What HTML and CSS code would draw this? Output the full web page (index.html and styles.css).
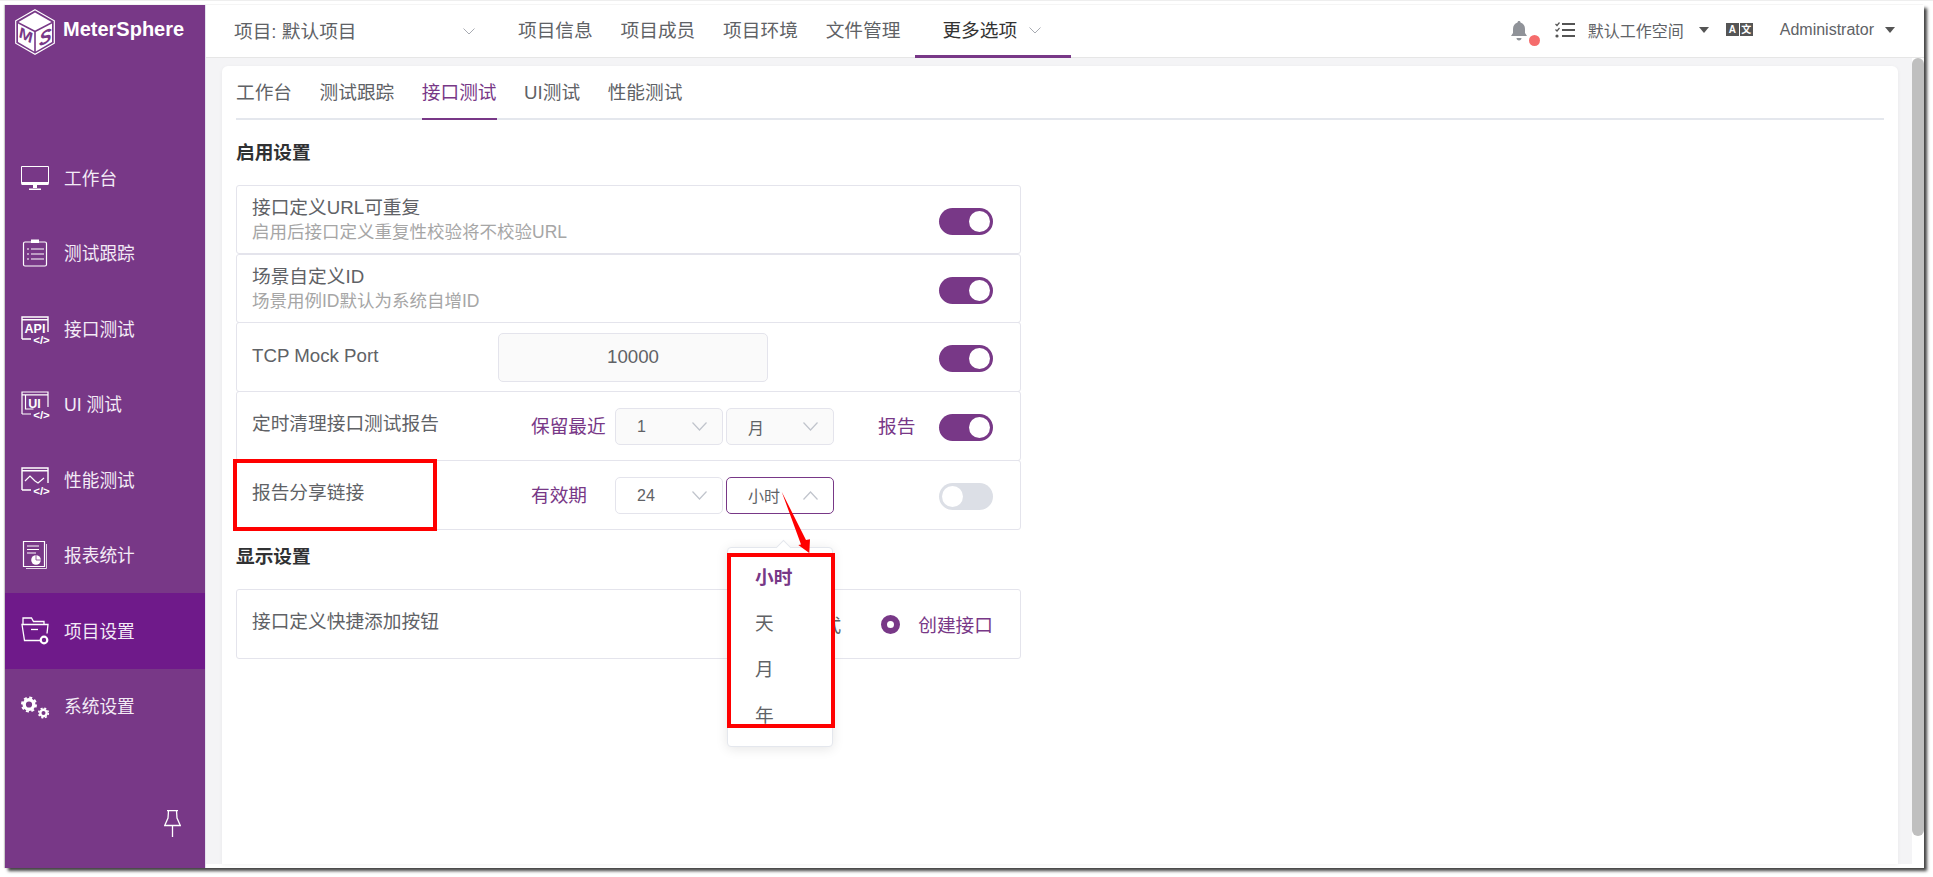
FILE: index.html
```html
<!DOCTYPE html>
<html>
<head>
	<title>MeterSphere</title>
	<meta charset="utf8"/>
	<link rel="stylesheet" href="styles.css">
</head>
<body>
<div class="window">
	<aside class="sidebar">
		<div class="logo">
			<svg class="logo-mark" viewBox="0 0 40 46" width="40" height="46">
				<polygon points="20,0.7 39.3,11.8 39.3,34.2 20,45.3 0.7,34.2 0.7,11.8" fill="none" stroke="#fff" stroke-width="1.2"/>
				<polygon points="20,3.5 36.5,13 20,21.5 3.5,13" fill="#fff"/>
				<polygon points="3,14.5 19.2,23 19.2,42.5 3,33" fill="#fff"/>
				<polygon points="37,14.5 20.8,23 20.8,42.5 37,33" fill="#fff"/>
				<text class="logo-letter" transform="translate(4 28) skewY(28)" font-size="16">M</text>
				<text class="logo-letter" transform="translate(24 38) skewY(-28)" font-size="19">S</text>
			</svg>
			<span class="logo-name">MeterSphere</span>
		</div>
		<nav class="menu">
			<a class="menu-item">
				<svg class="menu-icon" viewBox="0 0 28 28"><path d="M.5 2.500h27v17H.5z" fill="none" stroke="#fff"/><path d="M.5 18h27v3H.5z" fill="#fff"/><path d="M12 21h4v3h-4zM8 24.500h12v1.500H8z" fill="#fff"/></svg>
				<span>工作台</span>
			</a>
			<a class="menu-item">
				<svg class="menu-icon" viewBox="0 0 28 28"><rect x="2.500" y="3" width="23" height="24" rx="1.500" fill="none" stroke="#fff" stroke-width="1.200"/><path d="M10 .5h8v3.500h-8z" fill="#fff"/><path d="M6 10h2M10 10h13M6 15h2M10 15h13M6 20h2M10 20h13" stroke="#fff" stroke-width="1.200"/></svg>
				<span>测试跟踪</span>
			</a>
			<a class="menu-item">
				<svg class="menu-icon" viewBox="0 0 28 28"><path d="M1 24V2h26v15M1 24h9M1 4.800h26" fill="none" stroke="#fff" stroke-width="1.400"/><text class="icon-text" x="14" y="18" font-size="12.500">API</text><text class="icon-text" x="20.500" y="29" font-size="11.500">&lt;/&gt;</text></svg>
				<span>接口测试</span>
			</a>
			<a class="menu-item">
				<svg class="menu-icon" viewBox="0 0 28 28"><path d="M1 24V2h26v15M1 24h9M1 4.800h26M4.500 5v14h8" fill="none" stroke="#fff" stroke-width="1.200"/><text class="icon-text" x="13.500" y="17.500" font-size="12.500">UI</text><text class="icon-text" x="20.500" y="29" font-size="11.500">&lt;/&gt;</text></svg>
				<span>UI 测试</span>
			</a>
			<a class="menu-item">
				<svg class="menu-icon" viewBox="0 0 28 28"><path d="M1 24V2h26v15M1 24h9M1 4.800h26" fill="none" stroke="#fff" stroke-width="1.400"/><path d="M4 15l5-5 5 5 3 2 6-5" fill="none" stroke="#fff" stroke-width="1.200"/><text class="icon-text" x="20.500" y="29" font-size="11.500">&lt;/&gt;</text></svg>
				<span>性能测试</span>
			</a>
			<a class="menu-item">
				<svg class="menu-icon" viewBox="0 0 28 28"><path d="M2.500.5h21v25h-21z" fill="none" stroke="#fff" stroke-width="1.200"/><path d="M25.500 3v24.500H5" fill="none" stroke="#fff" stroke-width=".8"/><path d="M6 5h12M6 8.500h12M6 12h9" stroke="#fff" stroke-width="1.200"/><circle cx="15" cy="19" r="4.800" fill="#fff"/><path d="M15 19v-4.800M15 19h4.800" stroke="#783887" stroke-width=".8"/></svg>
				<span>报表统计</span>
			</a>
			<a class="menu-item active">
				<svg class="menu-icon" viewBox="0 0 28 28"><path d="M20 23.500H3.500L1 7.500h26l-1 9M2 7.500V1h8.500l2 3.500H23v3" fill="none" stroke="#fff" stroke-width="1.300"/><path d="M10 12.500h7" stroke="#fff" stroke-width="1.300"/><circle cx="23" cy="23" r="3.300" fill="none" stroke="#fff" stroke-width="2.200"/></svg>
				<span>项目设置</span>
			</a>
			<a class="menu-item">
				<svg class="menu-icon" viewBox="0 0 28 28">
					<circle cx="8" cy="12.500" r="4.800" fill="none" stroke="#fff" stroke-width="3.400"/>
					<circle cx="8" cy="12.500" r="7" fill="none" stroke="#fff" stroke-width="2" stroke-dasharray="3 2.500"/>
					<circle cx="22.500" cy="21" r="3.200" fill="none" stroke="#fff" stroke-width="2.400"/>
					<circle cx="22.500" cy="21" r="4.800" fill="none" stroke="#fff" stroke-width="1.600" stroke-dasharray="2 1.800"/>
				</svg>
				<span>系统设置</span>
			</a>
		</nav>
		<svg class="pin" viewBox="0 0 17 27" width="17" height="27"><path d="M3 .7h11M4.500 .7L4 8 .7 15.500h15.600L13 8 12.500 .7M8.500 15.500V27" fill="none" stroke="#fff" stroke-width="1.300"/></svg>
	</aside>

	<div class="main">
		<header class="topbar">
			<div class="project">
				<span>项目: 默认项目</span>
				<svg class="chevron" viewBox="0 0 12 7" width="12" height="7"><path d="M.5.5L6 6 11.500.5" fill="none" stroke="#a8abb2"/></svg>
			</div>
			<nav class="topnav">
				<a>项目信息</a>
				<a>项目成员</a>
				<a>项目环境</a>
				<a>文件管理</a>
			</nav>
			<div class="more">
				<span>更多选项</span>
				<svg class="chevron" viewBox="0 0 12 7" width="12" height="7"><path d="M.5.5L6 6 11.500.5" fill="none" stroke="#a8abb2"/></svg>
			</div>
			<div class="topright">
				<span class="bell">
					<svg viewBox="0 0 16 20" width="16" height="20"><path d="M8 0c1 0 1.500.7 1.500 1.500C12.500 2.300 14 5 14 8v4l2 3H0l2-3V8c0-3 1.500-5.700 4.500-6.500C6.500.7 7 0 8 0zM5.500 17h5c0 1.500-1 2.500-2.500 2.500S5.500 18.500 5.500 17z" fill="#909399"/></svg>
					<i class="bell-dot"></i>
				</span>
				<svg class="tasks" viewBox="0 0 20 16" width="20" height="16"><path d="M.5 2l1.500 1.500L4.500.5M.5 7.500L2 9l2.500-3" fill="none" stroke="#555" stroke-width="1.200"/><circle cx="2" cy="14" r="1.600" fill="#555"/><path d="M7 2h13M7 8h13M7 14h13" stroke="#555" stroke-width="2"/></svg>
				<span class="workspace">默认工作空间</span>
				<i class="caret"></i>
				<span class="lang"><b>A</b><b>文</b></span>
				<span class="user">Administrator</span>
				<i class="caret user-caret"></i>
			</div>
		</header>

		<div class="body">
			<div class="content">
				<section class="card">
					<div class="tabs">
						<a>工作台</a>
						<a>测试跟踪</a>
						<a class="active">接口测试</a>
						<a>UI测试</a>
						<a>性能测试</a>
					</div>

					<h3 class="section-title">启用设置</h3>
					<div class="setting desc">
						<div class="setting-text">
							<div class="name">接口定义URL可重复</div>
							<div class="hint">启用后接口定义重复性校验将不校验URL</div>
						</div>
						<span class="switch on"><i></i></span>
					</div>
					<div class="setting desc">
						<div class="setting-text">
							<div class="name">场景自定义ID</div>
							<div class="hint">场景用例ID默认为系统自增ID</div>
						</div>
						<span class="switch on"><i></i></span>
					</div>
					<div class="setting">
						<div class="name port-name">TCP Mock Port</div>
						<div class="port-input">10000</div>
						<span class="switch on"><i></i></span>
					</div>
					<div class="setting">
						<div class="name cleanup-name">定时清理接口测试报告</div>
						<span class="link-text keep">保留最近</span>
						<span class="select disabled">1<svg class="arrow" viewBox="0 0 15 9" width="15" height="9"><path d="M.5.5l7 7.500 7-7.500" fill="none" stroke="#c0c4cc" stroke-width="1.200"/></svg></span>
						<span class="select disabled">月<svg class="arrow" viewBox="0 0 15 9" width="15" height="9"><path d="M.5.5l7 7.500 7-7.500" fill="none" stroke="#c0c4cc" stroke-width="1.200"/></svg></span>
						<span class="link-text unit">报告</span>
						<span class="switch on"><i></i></span>
					</div>
					<div class="setting">
						<div class="name cleanup-name">报告分享链接</div>
						<span class="link-text keep">有效期</span>
						<span class="select">24<svg class="arrow" viewBox="0 0 15 9" width="15" height="9"><path d="M.5.5l7 7.500 7-7.500" fill="none" stroke="#c0c4cc" stroke-width="1.200"/></svg></span>
						<span class="select open"><span class="select-value">小时</span><svg class="arrow" viewBox="0 0 15 9" width="15" height="9"><path d="M.5 8.500l7-7.500 7 7.500" fill="none" stroke="#c0c4cc" stroke-width="1.200"/></svg></span>
						<span class="switch"><i></i></span>
					</div>

					<h3 class="section-title">显示设置</h3>
					<div class="setting">
						<div class="name">接口定义快捷添加按钮</div>
						<div class="radios">
							<span class="radio"></span><span class="radio-label off">调试模式</span>
							<span class="radio checked"></span><span class="radio-label">创建接口</span>
						</div>
					</div>
				</section>
			</div>
			<div class="scrollbar"><div class="thumb"></div></div>
		</div>
	</div>

	<ul class="dropdown">
		<li class="selected">小时</li>
		<li>天</li>
		<li>月</li>
		<li>年</li>
	</ul>

	<div class="mark mark-row"></div>
	<div class="mark mark-list"></div>
	<svg class="mark-arrow" viewBox="0 0 32 64" width="32" height="64"><polygon points="1.700,0.700 26,49 30,48.300 29.300,62 18.300,54 21,53.500" fill="#f00"/></svg>
</div>
</body>
</html>
```

FILE: styles.css
```css
html, body {
	height: 877px;
	margin: 0;
	overflow: hidden;
}

body {
	background: #fff;
	border-top: 1px solid #eee;
	box-sizing: border-box;
	color: #606266;
	font-family: "Liberation Sans", "Noto Sans CJK SC", sans-serif;
	font-size: 18.7px;
	padding: 4px 0 0 5px;
}

a {
	color: inherit;
}

.window {
	box-shadow: 3px 3px 3px #444, -1px 0 1px #ccc;
	display: flex;
	height: 863px;
	position: relative;
	width: 1919px;
}

/* sidebar */
.sidebar {
	background: #783887;
	border-right: 1px solid #e4e2ee;
	box-sizing: border-box;
	flex: none;
	height: 100%;
	position: relative;
	width: 201px;
}

.logo {
	align-items: center;
	display: flex;
	height: 46px;
	padding: 4px 0 0 10px;
}

.logo-name {
	color: #fff;
	font-size: 20px;
	font-weight: bold;
	margin-left: 8px;
	margin-top: -6px;
}

.logo-letter {
	fill: #783887;
	font-family: "Liberation Sans", sans-serif;
	font-style: italic;
	font-weight: bold;
}

.menu {
	margin-top: 85px;
}

.menu-item {
	align-items: center;
	color: #f3ebf6;
	display: flex;
	font-size: 17.700px;
	height: 75.500px;
	padding-left: 16px;
}

.menu-item span {
	margin-bottom: 2px;
}

.menu-item.active {
	background: #6f1a8a;
}

.menu-icon {
	flex: none;
	height: 28px;
	margin-right: 15px;
	overflow: visible;
	width: 28px;
}

.icon-text {
	fill: #fff;
	font-family: "Liberation Sans", sans-serif;
	font-weight: bold;
	text-anchor: middle;
}

.pin {
	bottom: 31px;
	position: absolute;
	right: 24px;
}

/* top bar */
.main {
	display: flex;
	flex: 1;
	flex-direction: column;
	min-width: 0;
}

.topbar {
	align-items: center;
	border-bottom: 1px solid #e6e6e6;
	display: flex;
	flex: none;
	height: 52px;
}

.project {
	align-items: center;
	display: flex;
	justify-content: space-between;
	margin-left: 28px;
	width: 241px;
}

.project span {
	margin-bottom: 4px;
}

.chevron {
	flex: none;
}

.topnav {
	display: flex;
	gap: 27.800px;
	margin-bottom: 6px;
	margin-left: 43px;
}

.more {
	align-items: center;
	border-bottom: 3px solid #783887;
	box-sizing: border-box;
	color: #333;
	display: flex;
	height: 52px;
	margin-bottom: -1px;
	margin-left: 15px;
	padding: 0 26px 0 27px;
	width: 156px;
}

.more span {
	margin-bottom: 3px;
}

.more .chevron {
	margin-left: 12px;
}

.topright {
	align-items: center;
	display: flex;
	font-size: 16px;
	margin-bottom: 3px;
	margin-left: auto;
	padding-right: 29px;
}

.bell {
	display: flex;
	margin-top: 2px;
	position: relative;
}

.bell-dot {
	background: #f56c6c;
	border-radius: 50%;
	height: 11px;
	left: 18px;
	position: absolute;
	top: 14px;
	width: 11px;
}

.tasks {
	margin-left: 28px;
}

.workspace {
	margin-left: 13px;
}

.caret {
	border-left: 5px solid transparent;
	border-right: 5px solid transparent;
	border-top: 6px solid #555;
	height: 0;
	margin-left: 15px;
	width: 0;
}

.user-caret {
	margin-left: 11px;
}

.lang {
	display: flex;
	gap: 1px;
	margin-left: 17px;
}

.lang b {
	background: #555;
	color: #fff;
	font-size: 10px;
	height: 13px;
	line-height: 13px;
	text-align: center;
	width: 13px;
}

.user {
	margin-left: 27px;
}

/* content */
.body {
	display: flex;
	flex: none;
	height: 806px;
}

.content {
	background: #f4f4f6;
	box-sizing: border-box;
	flex: 1;
	padding: 8px 14px 0 16px;
}

.card {
	background: #fff;
	border-radius: 6px 6px 0 0;
	box-shadow: 0 1px 4px rgba(0, 0, 0, .05);
	box-sizing: border-box;
	height: 798px;
	padding: 0 14px;
}

.tabs {
	border-bottom: 2px solid #e4e7ed;
	display: flex;
	gap: 27.500px;
	height: 52px;
}

.tabs a {
	height: 52px;
	line-height: 54px;
}

.tabs .active {
	border-bottom: 2px solid #783887;
	color: #783887;
}

.section-title {
	color: #303133;
	font-size: 18.700px;
	height: 24px;
	line-height: 24px;
	margin: 15px 0 20px;
}

.tabs + .section-title {
	margin-top: 21px;
}

.setting {
	align-items: center;
	border: 1px solid #e4e4ec;
	border-radius: 3px;
	box-sizing: border-box;
	display: flex;
	height: 70px;
	margin-top: -1px;
	padding: 0 27px 0 15px;
	width: 785px;
}

.section-title + .setting {
	margin-top: 0;
}

.setting.desc {
	height: 69px;
	margin-top: 0;
}

.name {
	line-height: 25px;
}

.setting > .name {
	margin-bottom: 5px;
}

.hint {
	color: #a6a6a6;
	font-size: 17.500px;
	line-height: 25px;
}

.setting > .port-name {
	margin-bottom: 3px;
	width: 246px;
}

.port-input {
	background: #fafafa;
	border: 1px solid #e4e4ec;
	border-radius: 5px;
	box-sizing: border-box;
	height: 49px;
	line-height: 45px;
	text-align: center;
	width: 270px;
}

.cleanup-name {
	width: 279px;
}

.link-text {
	color: #783887;
	margin-bottom: 4px;
}

.keep {
	width: 84px;
}

.unit {
	margin-left: 41px;
}

.select {
	align-items: center;
	border: 1px solid #e4e4ec;
	border-radius: 5px;
	box-sizing: border-box;
	display: flex;
	font-size: 16px;
	height: 37px;
	justify-content: space-between;
	margin: 1px 3px 0 0;
	padding: 0 15px 0 21px;
	width: 108px;
}

.select.disabled {
	background: #fafafa;
}

.select.open {
	border-color: #783887;
}

.select-value {
	margin-bottom: 2px;
}

.switch {
	background: #dcdfe6;
	border-radius: 14px;
	box-sizing: border-box;
	display: flex;
	height: 27px;
	margin-left: auto;
	margin-top: 3px;
	padding: 3px;
	width: 54px;
}

.switch.on {
	background: #783887;
	justify-content: flex-end;
}

.switch i {
	background: #fff;
	border-radius: 50%;
	height: 21px;
	width: 21px;
}

.radios {
	align-items: center;
	display: flex;
	margin-left: auto;
	margin-top: 1px;
}

.radio {
	background: #fff;
	border: 1px solid #dcdfe6;
	border-radius: 50%;
	box-sizing: border-box;
	height: 19px;
	margin-right: 18px;
	width: 19px;
}

.radio.checked {
	border: 6.500px solid #783887;
}

.radio-label {
	color: #783887;
	margin-bottom: 3px;
}

.radio-label.off {
	color: #606266;
	margin-right: 40px;
}

.scrollbar {
	flex: none;
	width: 12px;
}

.thumb {
	background: #bfbfbf;
	border-radius: 6px;
	height: 778px;
}

/* open select list */
.dropdown {
	background: #fff;
	border: 1px solid #e4e7ed;
	border-radius: 4px;
	box-shadow: 0 2px 12px rgba(0, 0, 0, .1);
	box-sizing: border-box;
	height: 200px;
	left: 722px;
	list-style: none;
	margin: 0;
	padding: 7px 0;
	position: absolute;
	top: 542px;
	width: 106px;
}

.dropdown::before {
	background: #fff;
	border-left: 1px solid #e4e7ed;
	border-top: 1px solid #e4e7ed;
	content: "";
	height: 10px;
	left: 50px;
	position: absolute;
	top: -6px;
	transform: rotate(45deg);
	width: 10px;
}

.dropdown li {
	height: 46px;
	line-height: 46px;
	padding-left: 27px;
}

.dropdown .selected {
	color: #783887;
	font-weight: bold;
}

/* red notes drawn on the screenshot */
.mark {
	border: 4px solid #f00;
	box-sizing: border-box;
	position: absolute;
}

.mark-row {
	height: 72px;
	left: 228px;
	top: 454px;
	width: 204px;
}

.mark-list {
	height: 175px;
	left: 722px;
	top: 548px;
	width: 108px;
}

.mark-arrow {
	left: 775px;
	position: absolute;
	top: 486px;
}
```
